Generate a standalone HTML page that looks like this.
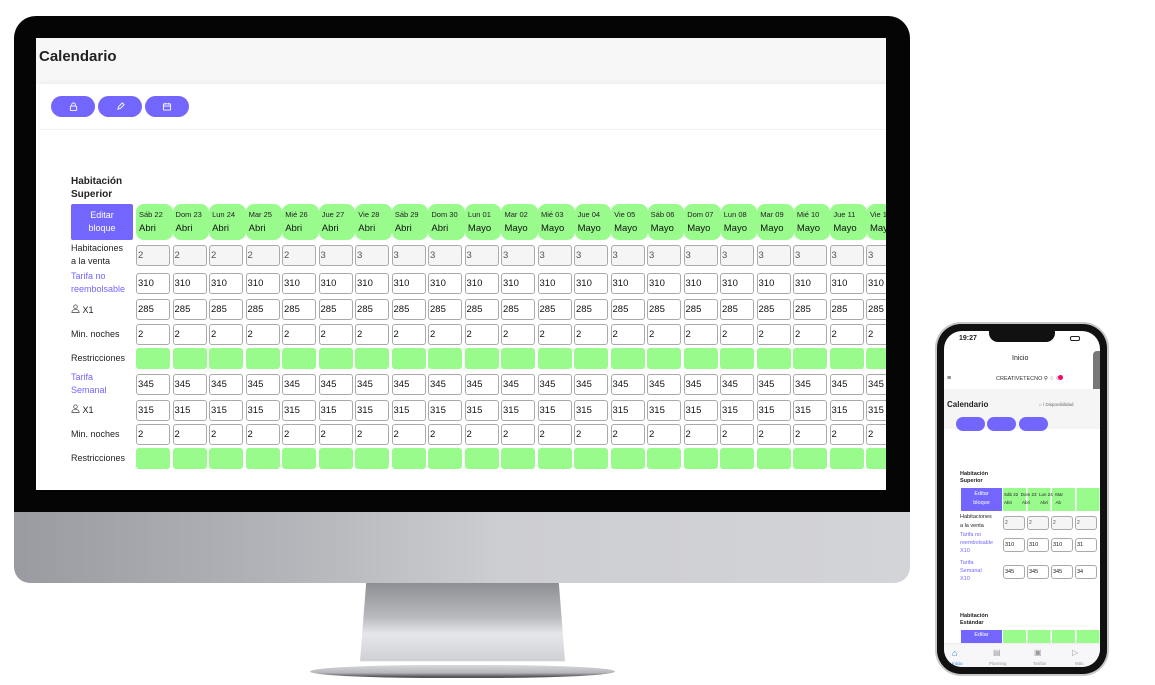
<!DOCTYPE html>
<html><head><meta charset="utf-8"><style>
*{box-sizing:border-box;margin:0;padding:0}
body{width:1155px;height:685px;background:#fff;position:relative;overflow:hidden;font-family:"Liberation Sans",sans-serif;color:#222}
.abs{position:absolute}
#bezel{left:14px;top:16px;width:896px;height:500px;background:#050505;border-radius:22px 22px 0 0}
#chin{left:14px;top:512px;width:896px;height:71px;background:linear-gradient(90deg,#9a9ba0,#b3b4b9 30%,#cdced2 55%,#d3d4d8);border-radius:0 0 16px 16px}
#neck{left:360px;top:583px;width:205px;height:85px;background:linear-gradient(180deg,#8e8f94,#b9babe 40%,#e6e7ea 60%,#c9cace);clip-path:polygon(3% 0,97% 0,100% 92%,0 92%)}
#base{left:310px;top:665px;width:305px;height:13px;background:linear-gradient(180deg,#d7d8db,#b6b7ba 60%,#555 90%);border-radius:50%/60%}
#screen{left:36px;top:38px;width:850px;height:452px;background:#fff;overflow:hidden}
.hdr{left:0;top:0;width:850px;height:46px;background:#f7f7f7}
.t{font-weight:bold;font-size:15px;left:3px;top:10px}
.btn{top:58px;width:44px;height:21px;background:#7366ff;border-radius:11px;display:flex;align-items:center;justify-content:center}
.line{left:4px;top:91px;width:846px;height:1px;background:#eef2f2}
.row{position:absolute;left:100px;display:flex;gap:2.5px}
.c{width:34px;height:21px;border:1px solid #aaa;border-radius:3px;font-size:9.5px;line-height:19px;padding-left:1px;flex:none;color:#111;background:#fff}
.g{background:#f5f5f5;color:#555}
.r{background:#98fb8c;border:none}
.h{width:36.55px;height:36px;background:#98fb8c;border-radius:8px;flex:none;font-size:7.5px;padding:6px 0 0 3px;color:#222}
.h b{display:block;font-weight:normal;font-size:9.5px;margin-top:4px;color:#111}
.lb{position:absolute;left:35px;font-size:9px;line-height:13px;color:#222}
.p{color:#7366ff}
.eb{left:35px;top:166px;width:62px;height:36px;background:#7366ff;color:#fff;font-size:9px;text-align:center;line-height:13px;padding-top:5px;border-radius:2px}
</style></head><body>
<div id="bezel" class="abs"></div>
<div id="chin" class="abs"></div>
<div id="neck" class="abs"></div>
<div id="base" class="abs"></div>
<div id="screen" class="abs">
 <div class="hdr abs"></div>
 <div class="t abs">Calendario</div>
 <div class="abs" style="left:4px;top:46px;width:846px;height:406px;background:#fff;box-shadow:0 -2px 4px #eee"></div>
 <div class="btn abs" style="left:15px"><svg width="9" height="9" viewBox="0 0 10 10" fill="none" stroke="#fff" stroke-width="1"><rect x="1.5" y="4.5" width="7" height="5" rx="1"/><path d="M3 4.5V3a2 2 0 0 1 4 0v1.5"/></svg></div>
 <div class="btn abs" style="left:62px"><svg width="9" height="9" viewBox="0 0 10 10" fill="none" stroke="#fff" stroke-width="1"><path d="M2 8l1-3 4-4 2 2-4 4z"/></svg></div>
 <div class="btn abs" style="left:109px"><svg width="10" height="9" viewBox="0 0 10 10" fill="none" stroke="#fff" stroke-width="1"><rect x="1" y="2" width="8" height="7" rx="1"/><path d="M1 4.5h8M3 1v2M7 1v2"/></svg></div>
 <div class="line abs"></div>
 <div class="lb" style="top:137px;font-weight:bold;font-size:10px">Habitación<br>Superior</div>
 <div class="eb abs">Editar<br>bloque</div>
 <div class="row" style="top:166px;gap:0">
  <div class="h">Sáb 22<b>Abri</b></div><div class="h">Dom 23<b>Abri</b></div><div class="h">Lun 24<b>Abri</b></div><div class="h">Mar 25<b>Abri</b></div><div class="h">Mié 26<b>Abri</b></div><div class="h">Jue 27<b>Abri</b></div><div class="h">Vie 28<b>Abri</b></div><div class="h">Sáb 29<b>Abri</b></div><div class="h">Dom 30<b>Abri</b></div><div class="h">Lun 01<b>Mayo</b></div><div class="h">Mar 02<b>Mayo</b></div><div class="h">Mié 03<b>Mayo</b></div><div class="h">Jue 04<b>Mayo</b></div><div class="h">Vie 05<b>Mayo</b></div><div class="h">Sáb 06<b>Mayo</b></div><div class="h">Dom 07<b>Mayo</b></div><div class="h">Lun 08<b>Mayo</b></div><div class="h">Mar 09<b>Mayo</b></div><div class="h">Mié 10<b>Mayo</b></div><div class="h">Jue 11<b>Mayo</b></div><div class="h">Vie 12<b>Mayo</b></div>
 </div>
 <div class="lb" style="top:204px">Habitaciones<br>a la venta</div>
 <div class="row" style="top:207px"><div class="c g">2</div><div class="c g">2</div><div class="c g">2</div><div class="c g">2</div><div class="c g">2</div><div class="c g">3</div><div class="c g">3</div><div class="c g">3</div><div class="c g">3</div><div class="c g">3</div><div class="c g">3</div><div class="c g">3</div><div class="c g">3</div><div class="c g">3</div><div class="c g">3</div><div class="c g">3</div><div class="c g">3</div><div class="c g">3</div><div class="c g">3</div><div class="c g">3</div><div class="c g">3</div></div>
 <div class="lb p" style="top:232px">Tarifa no<br>reembolsable</div>
 <div class="row" style="top:235px"><div class="c">310</div><div class="c">310</div><div class="c">310</div><div class="c">310</div><div class="c">310</div><div class="c">310</div><div class="c">310</div><div class="c">310</div><div class="c">310</div><div class="c">310</div><div class="c">310</div><div class="c">310</div><div class="c">310</div><div class="c">310</div><div class="c">310</div><div class="c">310</div><div class="c">310</div><div class="c">310</div><div class="c">310</div><div class="c">310</div><div class="c">310</div></div>
 <div class="lb" style="top:266px"><svg width="9" height="9" viewBox="0 0 10 10" fill="none" stroke="#555" stroke-width="0.9"><circle cx="5" cy="3" r="2"/><path d="M1 9.5c0-2.5 2-3.5 4-3.5s4 1 4 3.5z"/></svg> X1</div>
 <div class="row" style="top:261px"><div class="c">285</div><div class="c">285</div><div class="c">285</div><div class="c">285</div><div class="c">285</div><div class="c">285</div><div class="c">285</div><div class="c">285</div><div class="c">285</div><div class="c">285</div><div class="c">285</div><div class="c">285</div><div class="c">285</div><div class="c">285</div><div class="c">285</div><div class="c">285</div><div class="c">285</div><div class="c">285</div><div class="c">285</div><div class="c">285</div><div class="c">285</div></div>
 <div class="lb" style="top:290px">Min. noches</div>
 <div class="row" style="top:286px"><div class="c">2</div><div class="c">2</div><div class="c">2</div><div class="c">2</div><div class="c">2</div><div class="c">2</div><div class="c">2</div><div class="c">2</div><div class="c">2</div><div class="c">2</div><div class="c">2</div><div class="c">2</div><div class="c">2</div><div class="c">2</div><div class="c">2</div><div class="c">2</div><div class="c">2</div><div class="c">2</div><div class="c">2</div><div class="c">2</div><div class="c">2</div></div>
 <div class="lb" style="top:314px">Restricciones</div>
 <div class="row" style="top:310px"><div class="c r"></div><div class="c r"></div><div class="c r"></div><div class="c r"></div><div class="c r"></div><div class="c r"></div><div class="c r"></div><div class="c r"></div><div class="c r"></div><div class="c r"></div><div class="c r"></div><div class="c r"></div><div class="c r"></div><div class="c r"></div><div class="c r"></div><div class="c r"></div><div class="c r"></div><div class="c r"></div><div class="c r"></div><div class="c r"></div><div class="c r"></div></div>
 <div class="lb p" style="top:333px">Tarifa<br>Semanal</div>
 <div class="row" style="top:336px"><div class="c">345</div><div class="c">345</div><div class="c">345</div><div class="c">345</div><div class="c">345</div><div class="c">345</div><div class="c">345</div><div class="c">345</div><div class="c">345</div><div class="c">345</div><div class="c">345</div><div class="c">345</div><div class="c">345</div><div class="c">345</div><div class="c">345</div><div class="c">345</div><div class="c">345</div><div class="c">345</div><div class="c">345</div><div class="c">345</div><div class="c">345</div></div>
 <div class="lb" style="top:366px"><svg width="9" height="9" viewBox="0 0 10 10" fill="none" stroke="#555" stroke-width="0.9"><circle cx="5" cy="3" r="2"/><path d="M1 9.5c0-2.5 2-3.5 4-3.5s4 1 4 3.5z"/></svg> X1</div>
 <div class="row" style="top:362px"><div class="c">315</div><div class="c">315</div><div class="c">315</div><div class="c">315</div><div class="c">315</div><div class="c">315</div><div class="c">315</div><div class="c">315</div><div class="c">315</div><div class="c">315</div><div class="c">315</div><div class="c">315</div><div class="c">315</div><div class="c">315</div><div class="c">315</div><div class="c">315</div><div class="c">315</div><div class="c">315</div><div class="c">315</div><div class="c">315</div><div class="c">315</div></div>
 <div class="lb" style="top:390px">Min. noches</div>
 <div class="row" style="top:386px"><div class="c">2</div><div class="c">2</div><div class="c">2</div><div class="c">2</div><div class="c">2</div><div class="c">2</div><div class="c">2</div><div class="c">2</div><div class="c">2</div><div class="c">2</div><div class="c">2</div><div class="c">2</div><div class="c">2</div><div class="c">2</div><div class="c">2</div><div class="c">2</div><div class="c">2</div><div class="c">2</div><div class="c">2</div><div class="c">2</div><div class="c">2</div></div>
 <div class="lb" style="top:414px">Restricciones</div>
 <div class="row" style="top:410px"><div class="c r"></div><div class="c r"></div><div class="c r"></div><div class="c r"></div><div class="c r"></div><div class="c r"></div><div class="c r"></div><div class="c r"></div><div class="c r"></div><div class="c r"></div><div class="c r"></div><div class="c r"></div><div class="c r"></div><div class="c r"></div><div class="c r"></div><div class="c r"></div><div class="c r"></div><div class="c r"></div><div class="c r"></div><div class="c r"></div><div class="c r"></div></div>
</div>

<!-- phone -->
<div class="abs" style="left:935px;top:322px;width:174px;height:354px;border-radius:26px;background:#c8c8c8;padding:2px">
 <div style="width:100%;height:100%;border-radius:24px;background:#111;padding:7px;position:relative">
  <div style="width:100%;height:100%;border-radius:18px;background:#fff;overflow:hidden;position:relative;font-size:6px">
   <div class="abs" style="left:45px;top:0;width:66px;height:11px;background:#111;border-radius:0 0 9px 9px"></div>
   <div class="abs" style="left:15px;top:4px;font-size:7px;font-weight:bold">19:27</div>
   <div class="abs" style="left:126px;top:5px;width:10px;height:5px;border:1px solid #222;border-radius:2px"></div>
   <div class="abs" style="left:68px;top:24px;font-size:7px">Inicio</div>
   <div class="abs" style="left:3px;top:44px;font-size:7px">&#8801;</div>
   <div class="abs" style="left:52px;top:45px;font-size:5.5px;color:#333">CREATIVETECNO &#9906; &#9826; &#9790;</div>
   <div class="abs" style="left:114px;top:44px;width:5px;height:5px;border-radius:50%;background:#f06"></div>
   <div class="abs" style="left:149px;top:20px;width:8px;height:42px;background:#777;border-radius:4px 0 0 4px"></div>
   <div class="abs" style="left:0;top:58px;width:160px;height:40px;background:#f5f5f5"></div>
   <div class="abs" style="left:3px;top:69px;font-size:8px;font-weight:bold">Calendario</div>
   <div class="abs" style="left:95px;top:71px;font-size:4.5px;color:#666">&#8962; / Disponibilidad</div>
   <div class="abs" style="left:12px;top:86px;width:29px;height:14px;border-radius:7px;background:#7366ff"></div>
   <div class="abs" style="left:43px;top:86px;width:29px;height:14px;border-radius:7px;background:#7366ff"></div>
   <div class="abs" style="left:75px;top:86px;width:29px;height:14px;border-radius:7px;background:#7366ff"></div>
   <div class="abs" style="left:16px;top:140px;font-size:5.5px;font-weight:bold;line-height:7px">Habitación<br>Superior</div>
   <div class="abs" style="left:17px;top:157px;width:41px;height:23px;background:#7366ff;color:#fff;text-align:center;font-size:5.5px;line-height:9px;padding-top:2px">Editar<br>bloque</div>
   <div class="abs" style="left:59px;top:157px;width:100px;height:23px;background:repeating-linear-gradient(90deg,#98fb8c 0 23px,#fff 23px 24.5px)"></div>
   <div class="abs" style="left:60px;top:160px;font-size:4.5px;line-height:8px;width:100px;white-space:nowrap">Sáb 22 &nbsp;Dom 23 &nbsp;Lun 24 &nbsp;Mar<br>Abri &nbsp;&nbsp;&nbsp;&nbsp;&nbsp;&nbsp;&nbsp;Abri &nbsp;&nbsp;&nbsp;&nbsp;&nbsp;&nbsp;&nbsp;Abri &nbsp;&nbsp;&nbsp;&nbsp;&nbsp;Ab</div>
   <div class="abs" style="left:16px;top:182px;font-size:5.5px;line-height:9px">Habitaciones<br>a la venta</div>
   <div class="abs" style="left:16px;top:200px;font-size:5.5px;line-height:8px;color:#7366ff">Tarifa no<br>reembolsable<br>X10</div>
   <div class="abs" style="left:16px;top:228px;font-size:5.5px;line-height:8px;color:#7366ff">Tarifa<br>Semanal<br>X10</div>
   <div class="abs" style="left:59px;top:185px;display:flex;gap:2px"><div class="c g" style="width:22px;height:14px;font-size:5px;line-height:12px">2</div><div class="c g" style="width:22px;height:14px;font-size:5px;line-height:12px">2</div><div class="c g" style="width:22px;height:14px;font-size:5px;line-height:12px">2</div><div class="c g" style="width:22px;height:14px;font-size:5px;line-height:12px">2</div></div>
   <div class="abs" style="left:59px;top:207px;display:flex;gap:2px"><div class="c" style="width:22px;height:14px;font-size:5.5px;line-height:12px">310</div><div class="c" style="width:22px;height:14px;font-size:5.5px;line-height:12px">310</div><div class="c" style="width:22px;height:14px;font-size:5.5px;line-height:12px">310</div><div class="c" style="width:22px;height:14px;font-size:5.5px;line-height:12px">31</div></div>
   <div class="abs" style="left:59px;top:234px;display:flex;gap:2px"><div class="c" style="width:22px;height:14px;font-size:5.5px;line-height:12px">345</div><div class="c" style="width:22px;height:14px;font-size:5.5px;line-height:12px">345</div><div class="c" style="width:22px;height:14px;font-size:5.5px;line-height:12px">345</div><div class="c" style="width:22px;height:14px;font-size:5.5px;line-height:12px">34</div></div>
   <div class="abs" style="left:16px;top:282px;font-size:5.5px;font-weight:bold;line-height:7px">Habitación<br>Estándar</div>
   <div class="abs" style="left:17px;top:299px;width:41px;height:20px;background:#7366ff;color:#fff;text-align:center;font-size:5.5px;padding-top:2px">Editar</div>
   <div class="abs" style="left:59px;top:299px;width:100px;height:20px;background:repeating-linear-gradient(90deg,#98fb8c 0 23px,#fff 23px 24.5px)"></div>
   <div class="abs" style="left:0;top:312px;width:160px;height:30px;background:#f7f7fa;border-top:1px solid #eee;font-size:4.5px;color:#999">
    <span class="abs" style="left:8px;top:4px;color:#2a7fd4;font-size:9px">&#8962;</span><span class="abs" style="left:8px;top:17px;color:#2a7fd4">Inicio</span>
    <span class="abs" style="left:49px;top:4px;font-size:8px">&#9636;</span><span class="abs" style="left:45px;top:17px">Planning</span>
    <span class="abs" style="left:90px;top:4px;font-size:8px">&#9635;</span><span class="abs" style="left:89px;top:17px">Tarifas</span>
    <span class="abs" style="left:128px;top:4px;font-size:8px">&#9655;</span><span class="abs" style="left:131px;top:17px">Más</span>
   </div>
  </div>
 </div>
</div>
</body></html>
